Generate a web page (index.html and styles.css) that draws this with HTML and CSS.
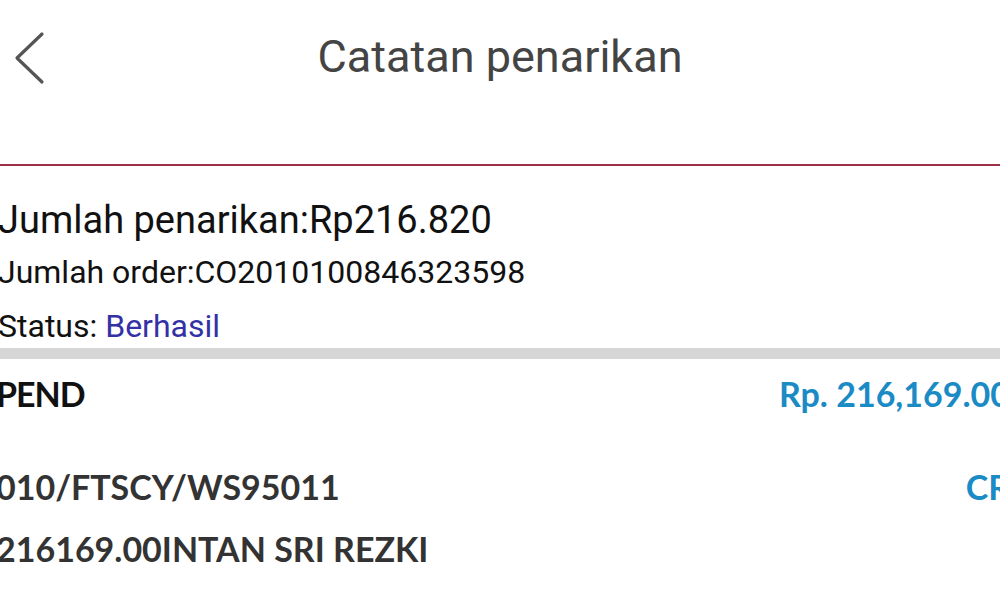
FILE: index.html
```html
<!DOCTYPE html>
<html lang="id">
<head>
  <meta charset="UTF-8" />
  <meta name="viewport" content="width=device-width, initial-scale=1"/>
  <title>Catatan penarikan</title>
  <link rel="stylesheet" href="styles.css">
</head>
<body class="page">

  <!-- Top bar -->
  <header class="topbar">
    <div class="back">
      <svg width="32" height="54" viewBox="0 0 32 54" aria-hidden="true">
        <polyline points="28,3 3,27 28,51" fill="none" stroke="#555" stroke-width="3.2" stroke-linecap="round" stroke-linejoin="round"/>
      </svg>
    </div>
    <h1 class="title">Catatan penarikan</h1>
    <div></div>
  </header>

  <!-- Summary -->
  <section class="summary">
    <p class="amount">Jumlah penarikan:Rp216.820</p>
    <p class="line">Jumlah order:CO2010100846323598</p>
    <p class="line">Status: <span class="ok">Berhasil</span></p>
  </section>

  <div class="band"></div>

  <!-- Bank detail -->
  <section class="detail">
    <div class="row">
      <span class="label">PEND</span>
      <span class="money">Rp. 216,169.00</span>
    </div>
    <div class="row second">
      <span class="ref">010/FTSCY/WS95011</span>
      <span class="money">CR</span>
    </div>
    <div class="row third">
      <span class="ref">216169.00INTAN SRI REZKI</span>
    </div>
  </section>

</body>
</html>
```

FILE: styles.css
```css
/* Base */
body.page {
  margin: 0;
  padding: 0;
  background: #fff;
  width: 1000px;
  height: 600px;
  overflow: hidden;
  font-family: Roboto, 'Noto Sans', sans-serif;
}

/* Top bar */
.topbar {
  display: grid;
  grid-template-columns: 1fr auto 1fr;
  align-items: center;
  height: 112px;
  padding-bottom: 52px;
  border-bottom: 2px solid #9e2f49;
}

.back {
  padding-left: 14px;
  padding-top: 4px;
}

.back svg {
  display: block;
}

.title {
  margin: 0;
  font-size: 45px;
  font-weight: 400;
  color: #444;
  line-height: 53px;
}

/* Summary */
.summary {
  padding: 31px 0 3px;
  margin-left: -2px;
  color: #111;
}

.summary p {
  margin: 0;
}

.amount {
  font-size: 38px;
  line-height: 46px;
}

.line {
  font-size: 32px;
  line-height: 38px;
  margin-top: 10px !important;
}

.line + .line {
  margin-top: 16px !important;
}

.ok {
  color: #3431a6;
}

.band {
  height: 11px;
  background: #d6d6d6;
}

/* Bank detail */
.detail {
  margin: 0 -10px 0 -4px;
  padding-top: 15px;
  font-family: Lato, 'Open Sans', sans-serif;
  font-size: 34px;
  line-height: 40px;
}

.row {
  display: flex;
  justify-content: space-between;
}

.row.second {
  margin-top: 53px;
}

.row.third {
  margin-top: 22px;
}

.label {
  font-weight: 700;
  color: #111;
  letter-spacing: -1px;
}

.ref {
  font-weight: 700;
  color: #333;
}

.money {
  font-weight: 700;
  color: #1a8bc4;
}
```
